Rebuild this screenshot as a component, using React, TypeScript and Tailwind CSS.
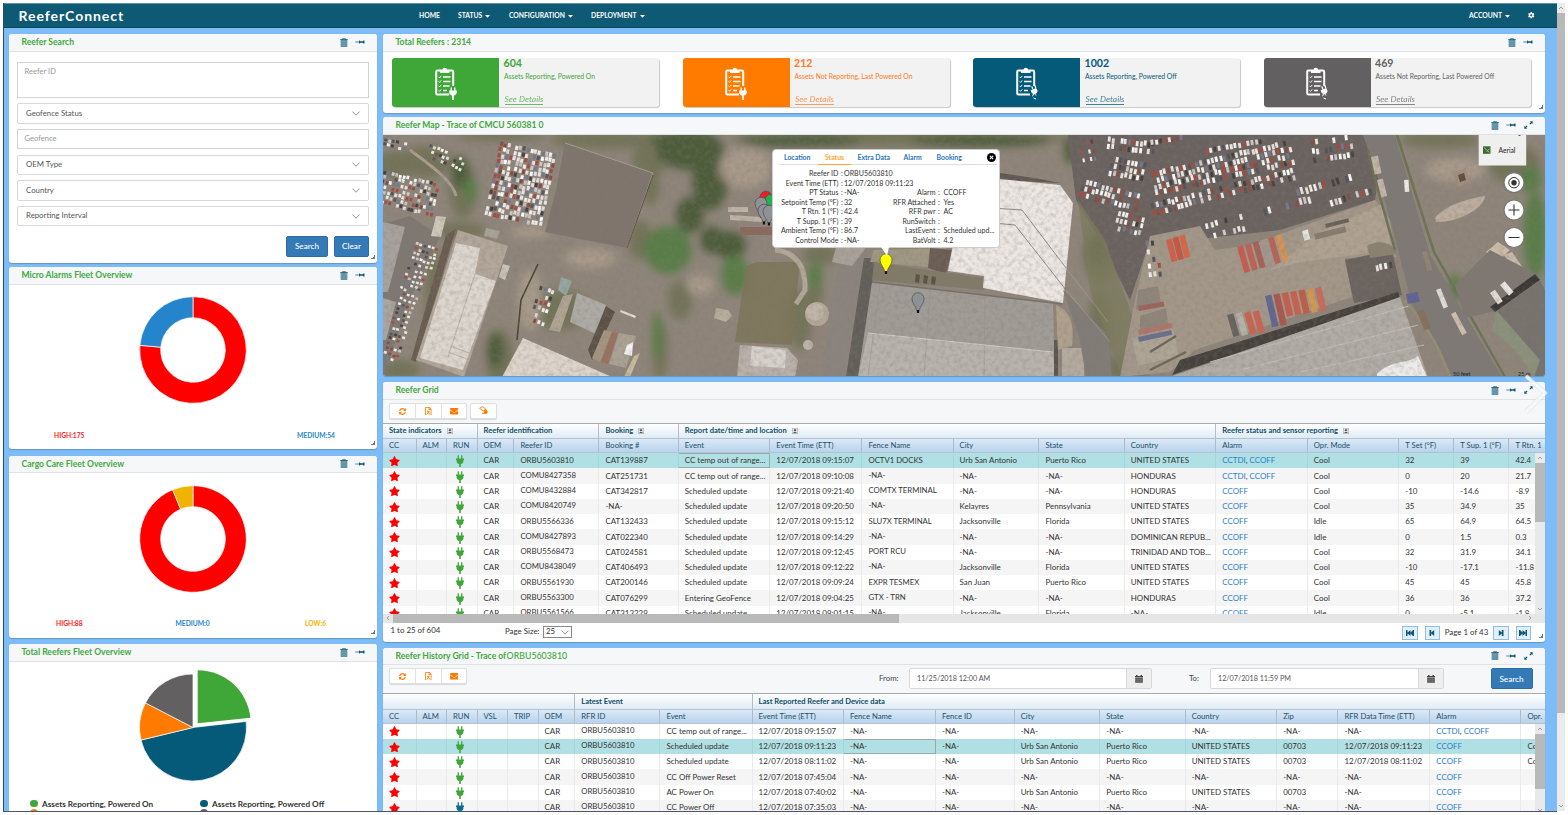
import React from "react";
import { FaStar, FaEnvelope, FaCog, FaSyncAlt, FaRegFileExcel } from "react-icons/fa";

/* ---------- small icons ---------- */
const Trash = () => (
  <svg className="h-[9px] w-[8px]" viewBox="0 0 8 9">
    <path d="M2.6 1V.4h2.800V1" fill="none" stroke="#2f7089" strokeWidth=".8" />
    <rect x=".3" y="1" width="7.400" height="1.100" fill="#2f7089" />
    <path d="M1.100 2.400h5.800V8.700H1.100Z" fill="#8fb0bd" stroke="#2f7089" strokeWidth=".7" />
    <path d="M2.700 3.200v4.800M4 3.200v4.800M5.300 3.200v4.800" stroke="#2f7089" strokeWidth=".6" />
  </svg>
);
const Pin = () => (
  <svg className="h-[6px] w-[10px]" viewBox="0 0 10 6">
    <path d="M.3 3h4" stroke="#3d7c93" strokeWidth=".9" />
    <path d="M4 1.200 5.600 2.200h2L8.500 1.400h1v3.200h-1L7.600 3.800h-2L4 4.800Z" fill="#0e5a75" />
  </svg>
);
const Expand = () => (
  <svg className="h-[8px] w-[9px]" viewBox="0 0 9 8">
    <path d="M5.800.3h2.900v2.700L7.700 2.200 6.200 3.500 5.400 2.800 6.800 1.300ZM.3 7.700V5l1 .8L2.800 4.500l.8.700L2.200 6.700l1 1Z" fill="#0e5a75" />
  </svg>
);
const Resize = () => (
  <svg className="absolute right-[2px] bottom-[4px] h-[4px] w-[4px]" viewBox="0 0 4 4">
    <path d="M4 0v4H0V3h2V2h1V0Z" fill="#777" />
  </svg>
);
const Chevron = () => (
  <svg className="h-[5px] w-[8px]" viewBox="0 0 8 5">
    <path d="M.5.6 4 4.200 7.500.6" fill="none" stroke="#777" strokeWidth=".8" />
  </svg>
);
const Caret = () => (
  <svg className="mt-[1px] h-[3px] w-[5px]" viewBox="0 0 5 3">
    <path d="M0 0h5L2.500 2.700Z" fill="currentColor" />
  </svg>
);
const Plus = () => (
  <svg className="ml-[5px] inline-block h-[6px] w-[6px]" viewBox="0 0 6 6">
    <rect x=".3" y=".3" width="5.400" height="5.400" fill="#f1f1f1" stroke="#aaa" strokeWidth=".6" />
    <path d="M3 1v2.400M1.700 2.200h2.600M1.500 4.600h3" stroke="#222" strokeWidth=".8" />
  </svg>
);
const Calendar = () => (
  <svg className="h-[8px] w-[8px]" viewBox="0 0 8 8">
    <path d="M0 1h1V0h1.500v1h3V0H7v1h1v1.600H0Z" fill="#444" />
    <rect x=".2" y="3" width="7.600" height="4.800" fill="#555" />
    <path d="M.2 4.600h7.600M.2 6.200h7.600M2.700 3v4.800M5.300 3v4.800" stroke="#8a8a8a" strokeWidth=".4" />
  </svg>
);
const Tag = () => (
  <svg className="mb-[2px] h-[9px] w-[9px]" viewBox="0 0 9 9">
    <path d="M.6 2.400 3.200.5l3.600 2.600L4.300 5Z" fill="#fff" stroke="#ff7b00" strokeWidth=".9" />
    <path d="M5 4.800 7 3.200l1.700 2.400c.2 1.500-1 2.600-2.600 2.400L3 7.700l.2-.9 1.900-.1Z" fill="#ff7b00" />
  </svg>
);

/* ---------- panel ---------- */
type PanelProps = { title: React.ReactNode; className: string; expand?: boolean; resize?: boolean; children: React.ReactNode };
const Panel = ({ title, className, expand, resize, children }: PanelProps) => (
  <section className={"relative flex shrink-0 flex-col overflow-hidden rounded-[3px] bg-white shadow-[0_1px_1px_rgba(0,0,0,0.2)] " + className}>
    <header className="flex h-[17.500px] shrink-0 items-center border-b border-[#e0e2e4] bg-[#f5f7f9] pr-[12px] pl-[12.500px]">
      <h2 className="flex-1 pt-[0.500px] text-[8.550px] leading-none font-bold whitespace-nowrap text-[#42a83c]">{title}</h2>
      <div className="flex items-center gap-[7px]">
        <Trash />
        <Pin />
        {expand && <span className="ml-[1px]"><Expand /></span>}
      </div>
    </header>
    {children}
    {resize && <Resize />}
  </section>
);

/* ---------- navbar ---------- */
const NavItem = ({ label, className, caret }: { label: string; className: string; caret?: boolean }) => (
  <a className={"flex items-center gap-[3px] " + className}>
    {label}
    {caret && <Caret />}
  </a>
);
const Navbar = () => (
  <nav className="flex h-[25px] shrink-0 items-center border-t border-b border-t-[#5f93a5] border-b-[#0b4a61] bg-[#0e5a75] text-[6.750px] font-bold text-white">
    <div className="w-[415px] pl-[14.500px] text-[14px] tracking-[0.950px]">ReeferConnect</div>
    <NavItem label="HOME" className="w-[39px]" />
    <NavItem label="STATUS" className="w-[51px]" caret />
    <NavItem label="CONFIGURATION" className="w-[82px]" caret />
    <NavItem label="DEPLOYMENT" className="flex-1" caret />
    <NavItem label="ACCOUNT" className="" caret />
    <FaCog className="mr-[22px] ml-[18px] size-[6.500px]" />
  </nav>
);

/* ---------- search panel ---------- */
const Select = ({ label }: { label: string }) => (
  <div className="flex h-[20.500px] items-center justify-between rounded-[2px] border border-[#d8d8d8] px-[8.500px] text-[7.800px] text-[#555]">
    {label}
    <Chevron />
  </div>
);
const Btn = ({ label, className }: { label: string; className: string }) => (
  <button className={"h-[21px] rounded-[2px] border border-[#2e6da4] bg-[#337ab7] text-[8.200px] font-medium text-white " + className}>{label}</button>
);
const SearchPanel = () => (
  <Panel title="Reefer Search" className="h-[229px]" resize>
    <div className="flex flex-col gap-[5.200px] pt-[10.500px] pr-[8px] pl-[7.500px]">
      <div className="h-[36px] border border-[#d4d4d4] px-[7px] pt-[3px] text-[7.600px] text-[#999]">Reefer ID</div>
      <Select label="Geofence Status" />
      <div className="flex h-[20.500px] items-center border border-[#d4d4d4] px-[7px] text-[7.600px] text-[#999]">Geofence</div>
      <Select label="OEM Type" />
      <Select label="Country" />
      <Select label="Reporting Interval" />
      <div className="mt-[4px] flex justify-end gap-[6px]">
        <Btn label="Search" className="w-[42px]" />
        <Btn label="Clear" className="w-[35px]" />
      </div>
    </div>
  </Panel>
);

/* ---------- charts ---------- */
const pt = (cx: number, cy: number, r: number, deg: number) => {
  const a = ((deg - 90) * Math.PI) / 180;
  return (cx + r * Math.cos(a)).toFixed(2) + " " + (cy + r * Math.sin(a)).toFixed(2);
};
const arc = (cx: number, cy: number, R: number, r: number, a: number, b: number) => {
  const big = b - a > 180 ? 1 : 0;
  if (r === 0) return `M${cx} ${cy}L${pt(cx, cy, R, a)}A${R} ${R} 0 ${big} 1 ${pt(cx, cy, R, b)}Z`;
  return `M${pt(cx, cy, R, a)}A${R} ${R} 0 ${big} 1 ${pt(cx, cy, R, b)}L${pt(cx, cy, r, b)}A${r} ${r} 0 ${big} 0 ${pt(cx, cy, r, a)}Z`;
};
const Donut = ({ split, color }: { split: number; color: string }) => (
  <svg className="mt-[10.500px] ml-[129px] h-[110px] w-[110px] shrink-0" viewBox="0 0 110 110">
    <path d={arc(55, 55, 53.300, 32.300, 0, split)} fill="#ff0000" stroke="#fff" strokeWidth=".7" />
    <path d={arc(55, 55, 53.300, 32.300, split, 360)} fill={color} stroke="#fff" strokeWidth=".7" />
  </svg>
);
const Pie = () => (
  <svg className="mt-[6.500px] ml-[129px] h-[116px] w-[120px] shrink-0" viewBox="0 0 120 116">
    <path d={arc(59.700, 55.200, 53, 0, 0, 84)} fill="#3fa638" />
    <path d={arc(55, 59.500, 53.500, 0, 83.500, 256.400)} fill="#045a78" stroke="#fff" strokeWidth=".7" />
    <path d={arc(55, 59.500, 53.500, 0, 256.400, 297.400)} fill="#ff7b00" stroke="#fff" strokeWidth=".7" />
    <path d={arc(55, 59.500, 53.500, 0, 297.400, 360)} fill="#636061" stroke="#fff" strokeWidth=".7" />
  </svg>
);
const Legend = ({ dot, label }: { dot: string; label: string }) => (
  <div className="flex items-center gap-[4.500px] whitespace-nowrap">
    <span className={"size-[7.500px] rounded-full " + dot} />
    {label}
  </div>
);

/* ---------- totals ---------- */
const Clipboard = ({ off }: { off?: boolean }) => (
  <svg className="h-[34px] w-[22px]" viewBox="0 0 22 34">
    <path d="M14 28.500H2.500A1.300 1.300 0 0 1 1.200 27.200V5.800A1.300 1.300 0 0 1 2.500 4.500h14.400a1.300 1.300 0 0 1 1.300 1.300V20" fill="none" stroke="#fff" strokeWidth="2" />
    <path d="M5 7V4h2.500a2.300 2.300 0 0 1 4.600 0h2.400v3Z" fill="#fff" />
    <path d="M8 11h7.500M8 15.500h7.500M8 20h6.500M8 24.500h4" stroke="#fff" strokeWidth="1.500" />
    <path d="m3.600 10.800 1 1.100 1.600-2M3.600 15.300l1 1.100 1.600-2M3.600 19.800l1 1.100 1.600-2M3.600 24.300l1 1.100 1.600-2" fill="none" stroke="#fff" strokeWidth=".9" />
    {off ? (
      <>
        <path d="m14.700 24.200 5.600-2.100 1.300 2.900c-.3 2-1.800 3.200-3.600 3.100-1.700-.1-2.900-1.800-3.300-3.900ZM15.200 20.600l1.200-.4 1 2.800-1.200.4ZM18.200 19.500l1.200-.4 1 2.800-1.200.4Z" fill="#fff" />
        <path d="m17.500 28-1 2.300M18.800 28l1.200 1.500M17.500 32l2.500 1" stroke="#fff" strokeWidth="1" />
      </>
    ) : (
      <path d="M14.200 24.500h7.600v1.800c0 1.900-1.400 3-2.900 3.200V34h-1.800v-4.500c-1.500-.2-2.900-1.300-2.900-3.200ZM15.500 21.500h1.400v3h-1.400ZM19.100 21.500h1.400v3h-1.400Z" fill="#fff" />
    )}
  </svg>
);
type CardProps = { n: string; text: string; bg: string; fg: string; off?: boolean };
const Card = ({ n, text, bg, fg, off }: CardProps) => (
  <div className="flex h-[49px] w-[267px] overflow-hidden rounded-[3px] bg-[#f2f2f2] shadow-[1px_1px_1px_#c8c8c8]">
    <div className={"flex w-[107px] shrink-0 items-center justify-center " + bg}>
      <Clipboard off={off} />
    </div>
    <div className={"pl-[4.500px] whitespace-nowrap " + fg}>
      <div className="text-[10.600px] leading-[11px] font-bold">{n}</div>
      <div className="mt-[3px] ml-[0.500px] text-[6.800px] leading-[8px]">{text}</div>
      <div className="mt-[13.500px] ml-[1px] w-fit border-b border-current text-[8.500px] leading-[10px] italic opacity-75">See Details</div>
    </div>
  </div>
);

/* ---------- map ---------- */
const rng = (seed: number) => () => {
  seed = (seed * 1103515245 + 12345) % 2147483648;
  return seed / 2147483648;
};
type LotProps = { x: number; y: number; cols: number; rows: number; dx: number; dy: number; rot: number; seed: number; fill?: number; cw?: number; ch?: number };
const paint = ["#f6f2f0", "#ffffff", "#e6e0de", "#f0ecea", "#a9493f", "#54535c", "#cfcaca", "#454040", "#efe9e6", "#8c4b42", "#717a90", "#f4efec"];
const Lot = ({ x, y, cols, rows, dx, dy, rot, seed, fill = 0.8, cw = 2.200, ch = 4 }: LotProps) => {
  const r = rng(seed);
  for (let i = 0; i < 5; i++) r();
  const out: React.ReactNode[] = [];
  for (let j = 0; j < rows; j++)
    for (let i = 0; i < cols; i++) {
      const keep = r() < fill;
      const c = paint[Math.floor(r() * paint.length)];
      const ox = r() * 1.200;
      const oy = r() * 2;
      if (keep) out.push(<rect key={j + "-" + i} x={i * dx + ox} y={j * dy + oy} width={cw} height={ch} fill={c} />);
    }
  return <g transform={`translate(${x} ${y}) rotate(${rot})`}>{out}</g>;
};
const Blobs = ({ list, color }: { list: number[][]; color: string }) => (
  <g fill={color}>
    {list.map(([x, y, a, b], i) => (
      <ellipse key={i} cx={x} cy={y} rx={a} ry={b} />
    ))}
  </g>
);
const Crate = ({ x, y, w, h, rot, c }: { x: number; y: number; w: number; h: number; rot: number; c: string }) => (
  <rect x={x} y={y} width={w} height={h} fill={c} transform={`rotate(${rot} ${x} ${y})`} />
);
const Marker = ({ x, y, c }: { x: number; y: number; c: string }) => (
  <g transform={`translate(${x} ${y})`}>
    <path d="M-1.300 15 C-2 10-6 8.500-6 3.500a6 6.300 0 0 1 12 0C6 8.500 2 10 1.300 15Z" fill={c} stroke="#4d4d4d" strokeWidth=".7" />
    <rect x="-1.100" y="14.500" width="2.200" height="3" fill="#111" />
  </g>
);
const Imagery = () => (
  <svg className="block h-[241.500px] w-full" viewBox="383 135 1162 241.500" preserveAspectRatio="none">
    <defs>
      <filter id="soft" x="-5%" y="-5%" width="110%" height="110%">
        <feGaussianBlur stdDeviation="4" />
      </filter>
      <filter id="edge" x="0" y="0" width="100%" height="100%">
        <feGaussianBlur stdDeviation=".5" />
      </filter>
      <filter id="grain" x="0" y="0" width="100%" height="100%">
        <feTurbulence type="fractalNoise" baseFrequency=".22" numOctaves="3" seed="7" />
        <feColorMatrix type="matrix" values="0 0 0 0 .22  0 0 0 0 .2  0 0 0 0 .15  1.300 0 0 0 -.52" />
      </filter>
    </defs>
    <rect x="383" y="135" width="1162" height="242" fill="#8f857b" />
    <g filter="url(#soft)">
      <Blobs color="#727358" list={[[395, 165, 20, 14], [425, 162, 26, 16], [463, 190, 14, 28], [500, 136, 45, 5], [460, 230, 26, 8], [610, 140, 60, 9], [650, 160, 18, 16], [640, 240, 12, 20], [650, 185, 10, 20], [560, 310, 30, 20], [435, 300, 10, 50], [400, 370, 20, 10], [500, 360, 14, 30], [660, 350, 8, 30], [680, 300, 12, 20], [900, 138, 170, 8], [820, 255, 18, 10], [800, 320, 12, 30], [815, 290, 8, 20], [1100, 260, 16, 22], [1100, 330, 12, 40], [1120, 370, 14, 14], [1440, 140, 40, 8], [1515, 165, 26, 20]]} />
      <Blobs color="#4d5c3a" list={[[690, 150, 34, 20], [710, 180, 18, 30], [690, 215, 14, 18], [730, 245, 16, 14], [460, 172, 9, 16], [495, 350, 8, 18], [712, 240, 12, 14], [680, 140, 30, 8], [800, 141, 60, 6], [980, 141, 70, 6], [1070, 150, 6, 14], [1098, 250, 12, 16], [1178, 285, 13, 14]]} />
      <Blobs color="#597d46" list={[[668, 250, 24, 24], [735, 275, 14, 20], [657, 335, 5, 24], [1535, 235, 12, 44], [1530, 180, 12, 12], [1455, 288, 7, 14], [815, 275, 8, 12], [470, 190, 7, 12]]} />
      <Blobs color="#a89a8b" list={[[745, 168, 26, 20], [590, 258, 26, 10], [530, 232, 20, 6], [1455, 170, 30, 12], [700, 285, 14, 10], [530, 300, 12, 30]]} />
    </g>
    <g filter="url(#edge)">
      <path d="M565 143 653 173 627 248 545 232 556 190Z" fill="#7f756e" />
      <path d="M565 143 653 173 627 248" fill="none" stroke="#a69c8e" strokeWidth="1" />
      <path d="M653 175 627 248" stroke="#57503f" strokeWidth="1" />
      <path d="M410 150C430 165 452 180 456 196" fill="none" stroke="#a99d8c" strokeWidth="3" />
      <path d="M383 224 410 216 440 236 410 300 383 377Z" fill="#7f7872" />
      <path d="M383 222 405 227 388 292 383 292Z" fill="#a8a29c" />
      <path d="M383 298 396 302 386 340 383 340Z" fill="#aba6a0" />
      <path d="M446 235 456 229 416 362 411 360Z" fill="#6a5b51" />
      <path d="M458 230 508 246 464 377 416 360Z" fill="#b3a69b" />
      <path d="M456 243 480 248 475 274 496 281 463 370 420 358Z" fill="#ddd6cf" />
      <path d="M475 274 448 357M450 346l22 8M448 352l22 8" stroke="#b3aaa2" strokeWidth=".8" />
      <path d="M436 216 446 217 441 237 431 236Z" fill="#cfc8bd" />
      <path d="M486 228 500 231 497 239 484 236Z" fill="#a9a397" />
      <path d="M503 264 510 266 505 280 499 277Z" fill="#c9c3bb" />
      <path d="M538 264 521 300 517 340" fill="none" stroke="#4a4536" strokeWidth="1.600" />
      <path d="M523 338 612 377 502 377Z" fill="#ddd4cb" />
      <path d="M577 293 606 305 596 334 570 322Z" fill="#aeaba6" />
      <path d="M563 296 573 294 560 332 549 330Z" fill="#b0a493" />
      <path d="M606 306 615 312 592 360 588 350Z" fill="#5b5147" />
      <path d="M604 330 612 332 600 362 592 358Z" fill="#a3957f" />
      <path d="M612 332 618 333 608 364 601 362Z" fill="#9a7161" />
      <path d="M619 333 636 336 626 368 609 364Z" fill="#aba195" />
      <path d="M627 345 633 342 632 356 624 354Z" fill="#f5f5f5" />
      <path d="M561 277 572 281 566 296 558 290Z" fill="#93a6a1" />
      <path d="M621 310l15 6-1 2-15-6Z" fill="#e6dfd6" />
      <path d="M634 356l6-3-10 24h-6Z" fill="#c9b9a2" />
      <path d="M728 207h20v5h-20ZM730 215l50 3v5l-50-3Z" fill="#bfb2a6" />
      <path d="M740 227h34v8h-34Z" fill="#8a6a5c" />
      <path d="M746 266 757 262 800 262 792 345 735 342Z" fill="#7a7356" opacity=".8" />
      <path d="M716 308l12 2 4 6-6 6-12-4Z" fill="#b9ad9e" />
      <path d="M740 345 787 348 798 360 795 377 737 377Z" fill="#b9b1aa" />
      <path d="M752 346 786 350 785 368 750 366Z" fill="#d6d1cb" />
      <path d="M775 250C797 252 806 268 805 290L796 304" fill="none" stroke="#b3a898" strokeWidth="5" />
      <circle cx="817" cy="314" r="12" fill="#b3a79a" />
      <circle cx="815" cy="312" r="9" fill="#c1b6aa" />
      <circle cx="808" cy="345" r="5" fill="#b9b5a8" />
      <path d="M842 250 868 252 846 377 822 377 834 290Z" fill="#8b847e" />
      <path d="M838 240 872 240 852 266 832 262Z" fill="#a9a199" />
      <path d="M864 258 876 258 858 377 846 377Z" fill="#625e5a" />
      <path d="M874 250 946 248 940 268 870 262Z" fill="#a09784" />
      <path d="M930 248 952 250 946 274 928 268Z" fill="#6b5d53" />
      <path d="M874 262 984 278 984 290 872 280Z" fill="#817a69" />
      <path d="M916 274l4 1-1 8-4-1ZM924 275l4 1-1 8-4-1ZM932 276l4 1-1 8-4-1Z" fill="#5a5244" />
      <path d="M1000 173 1040 179 1060 183 1000 180Z" fill="#5f5852" />
      <path d="M990 178 1060 185 1073 203 1063 303 983 288 984 276 948 271 953 245Z" fill="#ece7e3" />
      <path d="M872 282 1053 303 1055 377 858 377Z" fill="#a09c97" />
      <path d="M868 333 1053 352 1055 377 858 377Z" fill="#b8b3ad" />
      <path d="M880 282 868 377M930 290 924 377M985 296 984 377" stroke="#94908b" strokeWidth=".5" />
      <path d="M872 282 1062 304" stroke="#75706a" strokeWidth="1.500" />
      <path d="M868 333 1053 352" stroke="#cfcac5" strokeWidth="1" />
      <path d="M1054 340h4v38h-4Z" fill="#5a5650" />
      <path d="M1056 305C1072 312 1074 325 1072 346L1058 350Z" fill="#b0a08e" />
      <path d="M1062 348h22v28h-22Z" fill="#b3aaa0" />
      <path d="M1063 290 1108 335 1112 377 1086 377 1080 340Z" fill="#807b77" />
      <path d="M1068 135 1385 135 1375 200 1280 230 1190 240 1150 240 1130 300 1100 240 1076 200Z" fill="#6a625e" />
      <path d="M1078 200 1105 240 1130 310 1150 377 1122 377 1090 290Z" fill="#7b7b5c" opacity=".8" />
      <path d="M1150 236 1200 226 1215 250 1250 245 1375 200 1390 220 1396 257 1345 258 1352 297 1195 350 1170 372 1120 377 1135 300Z" fill="#a3978a" />
      <path d="M1320 232 1382 204 1392 250 1300 262 1270 270Z" fill="#b5a797" opacity=".7" />
      <path d="M1345 260 1392 250 1402 295 1354 303Z" fill="#6a645e" />
      <path d="M1367 246C1380 238 1394 244 1398 254L1370 258Z" fill="#8b8270" />
      <path d="M1180 360 1398 292 1400 298 1172 375Z" fill="#45423c" />
      <path d="M1170 377 1400 297 1428 377Z" fill="#b0aca7" />
      <path d="M1210 362 1409 306M1240 370 1418 325M1300 372 1424 345" stroke="#c2beb9" strokeWidth="1" />
      <path d="M1377 374C1390 360 1408 364 1418 356L1427 377H1377Z" fill="#ecebe9" />
      <path d="M1363 135 1395 135 1430 255 1502 377 1452 377 1412 305 1398 250 1382 190Z" fill="#7e7974" />
      <path d="M1368 150 1378 190 1395 250M1397 135 1434 252 1505 377" fill="none" stroke="#6d7255" strokeWidth="2.500" />
      <path d="M1405 300C1430 330 1440 350 1450 377" fill="none" stroke="#958d74" strokeWidth="3" />
      <path d="M1435 218C1445 205 1470 198 1485 196 1484 208 1460 222 1436 222Z" fill="#bdae9f" />
      <path d="M1486 252 1498 242 1510 250 1496 263Z" fill="#cdbda8" />
      <path d="M1504 255l8-3 11 16-7 4Z" fill="#c9baab" />
      <path d="M1455 285 1490 250 1538 275 1500 310 1465 318Z" fill="#7f7872" />
      <path d="M1490 307 1535 274 1540 280 1495 312Z" fill="#3a3834" />
      <path d="M1497 311 1540 280 1545 290V377H1536L1500 330Z" fill="#77726d" />
      <path d="M1497 311 1540 360 1534 377 1515 350 1492 330Z" fill="#8b917d" />
      <path d="M1453 172 1466 168 1470 182 1458 187Z" fill="#a58d7b" />
      <path d="M1458 175 1464 173 1466 180 1460 182Z" fill="#5b5047" />
      <path d="M1138 290l20-4 3 18-25 6ZM1140 316l26-8 2 16-28 6Z" fill="#8f857a" />
      <Crate x={1132} y={338} w={42} h={28} rot={-12} c="#aea597" />
      <path d="M1150 352 1176 336M1150 370 1186 352" stroke="#6d665c" strokeWidth="2.500" />
      <Lot x={500} y={141} cols={15} rows={14} dx={3.900} dy={5.400} rot={12} seed={11} fill={0.92} cw={3} ch={4.200} />
      <Lot x={430} y={143} cols={10} rows={3} dx={4} dy={5} rot={22} seed={5} fill={0.75} cw={2.800} ch={3} />
      <Lot x={384} y={169} cols={15} rows={7} dx={3.900} dy={5} rot={14} seed={9} fill={0.85} cw={2.800} ch={3.400} />
      <Lot x={384} y={137} cols={6} rows={2} dx={4} dy={5} rot={12} seed={3} cw={3} ch={3} />
      <Lot x={416} y={241} cols={6} rows={5} dx={4} dy={5} rot={16} seed={22} fill={0.92} cw={2.800} ch={2.600} />
      <Lot x={407} y={266} cols={5} rows={6} dx={4.500} dy={5} rot={20} seed={17} fill={0.88} cw={2.800} ch={2.400} />
      <Lot x={400} y={296} cols={4} rows={6} dx={4.500} dy={5} rot={20} seed={19} fill={0.88} cw={2.800} ch={2.400} />
      <Lot x={392} y={326} cols={4} rows={7} dx={4.300} dy={5} rot={18} seed={31} fill={0.9} cw={3} ch={2.600} />
      <Lot x={540} y={285} cols={4} rows={6} dx={4.200} dy={6.500} rot={18} seed={41} fill={0.65} cw={2.800} />
      <Lot x={1078} y={142} cols={4} rows={3} dx={4} dy={8} rot={-12} seed={33} fill={0.75} />
      <Lot x={1108} y={136} cols={12} rows={2} dx={4} dy={7} rot={6} seed={35} fill={0.9} cw={2.800} ch={5.200} />
      <Lot x={1112} y={155} cols={9} rows={3} dx={4} dy={7} rot={12} seed={47} fill={0.9} cw={2.800} ch={5.200} />
      <Lot x={1082} y={178} cols={15} rows={3} dx={4.100} dy={6.500} rot={14} seed={51} fill={0.88} cw={2.800} ch={5} />
      <Lot x={1118} y={210} cols={7} rows={3} dx={4.100} dy={7} rot={14} seed={57} fill={0.7} cw={2.800} ch={5} />
      <Lot x={1150} y={171} cols={35} rows={4} dx={4.100} dy={6.500} rot={-13} seed={67} fill={0.9} cw={2.800} ch={5.400} />
      <Lot x={1150} y={203} cols={36} rows={2} dx={4.100} dy={6.500} rot={-14} seed={71} fill={0.9} cw={2.800} ch={5.400} />
      <Lot x={1150} y={139} cols={8} rows={1} dx={4.200} dy={7} rot={-8} seed={77} fill={0.9} cw={2.800} ch={5} />
      <Lot x={1204} y={148} cols={14} rows={1} dx={4.200} dy={7} rot={-10} seed={73} fill={0.9} cw={2.800} ch={5} />
      <Lot x={1310} y={139} cols={10} rows={3} dx={4.200} dy={9} rot={-8} seed={79} fill={0.65} cw={2.800} ch={5.600} />
      <Lot x={1204} y={222} cols={10} rows={2} dx={5} dy={12} rot={-14} seed={83} fill={0.5} cw={2.800} ch={5.600} />
      <Lot x={1290} y={190} cols={14} rows={1} dx={4.600} dy={9} rot={-16} seed={89} fill={0.7} cw={2.800} ch={7} />
      <Lot x={1262} y={208} cols={12} rows={1} dx={4.600} dy={9} rot={-15} seed={91} fill={0.5} cw={2.800} ch={7} />
      <Lot x={1328} y={199} cols={10} rows={1} dx={4.600} dy={9} rot={-16} seed={97} fill={0.9} cw={2.800} ch={6.500} />
      <Lot x={1145} y={240} cols={3} rows={5} dx={4.600} dy={8} rot={-6} seed={101} fill={0.6} cw={3} ch={5} />
      <Lot x={1374} y={264} cols={5} rows={1} dx={4.600} dy={9} rot={-10} seed={105} fill={0.8} cw={2.800} ch={6} />
      {["#d0614b", "#c85643", "#d4684a"].map((c, i) => (
        <Crate key={i} x={1166 + i * 6.500} y={240 - i * 2} w={6} h={23} rot={-14} c={c} />
      ))}
      {["#c65c50", "#bd6258", "#a7625a", "#a39792", "#b8645a", "#d69455"].map((c, i) => (
        <Crate key={i} x={1237 + i * 7.700} y={247 - i * 2.200} w={6} h={27} rot={-16} c={c} />
      ))}
      {["#66625e", "#b5b2ad", "#cb6451", "#cb6455"].map((c, i) => (
        <Crate key={i} x={1227 + i * 8.500} y={315 - i} w={6.500} h={23} rot={-16} c={c} />
      ))}
      {["#5f6690", "#a8584f", "#c75d50", "#c9604f", "#bf5d4c", "#cf9a50", "#ca6a5b"].map((c, i) => (
        <Crate key={i} x={1265 + i * 8.300} y={296 - i * 1.300} w={6.500} h={i < 2 ? 32 : 24} rot={-13} c={c} />
      ))}
      <Crate x={1371} y={157} w={7} h={18} rot={-12} c="#c2b3a6" />
      <Crate x={1377} y={180} w={6} h={18} rot={-14} c="#c2b5ab" />
      <Crate x={1404} y={180} w={4.500} h={12} rot={-4} c="#ecebe9" />
      <Crate x={1422} y={252} w={5} h={20} rot={-16} c="#948373" />
      <Crate x={1436} y={290} w={5} h={20} rot={-22} c="#e0ddd9" />
      <Crate x={1451} y={314} w={5} h={24} rot={-28} c="#cfbeb0" />
      <Crate x={1406} y={294} w={12} h={10} rot={-10} c="#5f6391" />
      <Crate x={1417} y={312} w={7} h={20} rot={-22} c="#85705f" />
      <Crate x={1490} y={293} w={6} h={14} rot={-34} c="#e0dcd8" />
      <Crate x={1500} y={285} w={6} h={14} rot={-40} c="#e9e7e4" />
      <Crate x={1314} y={234} w={32} h={6} rot={-14} c="#857b70" />
      <Crate x={1325} y={224} w={24} h={4} rot={-14} c="#6b6258" />
      <Crate x={1302} y={231} w={6} h={10} rot={-14} c="#e6e4e2" />
      <Crate x={1138} y={306} w={26} h={5} rot={-10} c="#9a655c" />
      <Crate x={1138} y={337} w={34} h={5} rot={-12} c="#6b6e8c" />
      <Crate x={1138} y={330} w={34} h={5} rot={-12} c="#b07468" />
    </g>
    <rect x="383" y="135" width="1162" height="242" filter="url(#grain)" opacity=".5" />
    <path d="M999 208.500 1022 210 1066 268M999 223.500 1015 225 1066 290" fill="none" stroke="#666" strokeWidth=".7" />
    <path d="M1066 268 1108 322M1066 290 1110 342" fill="none" stroke="#bbb" strokeWidth=".6" opacity=".6" />
    <Marker x={766} y={194} c="#ee1c25" />
    <Marker x={771} y={197} c="#22b14c" />
    <Marker x={761} y={200} c="#8e9296" />
    <Marker x={764} y={207} c="#8e9296" />
    <Marker x={769} y={208} c="#8e9296" />
    <Marker x={886} y={256.500} c="#ffff00" />
    <Marker x={918} y={295.500} c="#8e9296" />
    <rect x="1478.700" y="135" width="47.500" height="30.500" fill="#efefed" />
    <rect x="1483" y="146.300" width="7.500" height="7.500" fill="#3f6a2f" />
    <path d="m1484 147.500 5.500 5M1486.500 152l3-3.500" stroke="#b5c7a5" strokeWidth=".8" />
    <text x="1498.500" y="152.800" fontSize="6.700" fill="#222">Aerial</text>
    <rect x="1518.500" y="135" width="2" height="1" fill="#555" />
    {[182.700, 210, 237.500].map((y) => (
      <circle key={y} cx="1514" cy={y} r="10" fill="#fff" stroke="#777" strokeWidth="1.200" />
    ))}
    <circle cx="1514" cy="182.700" r="5.200" fill="none" stroke="#333" strokeWidth="1" />
    <circle cx="1514" cy="182.700" r="2.700" fill="#333" />
    <path d="M1508.500 210h11M1514 204.500v11M1508.500 237.500h11" stroke="#333" strokeWidth="1.100" />
    <text x="1453" y="376" fontSize="5.500" fill="#222">50 feet</text>
    <text x="1518" y="376" fontSize="5.500" fill="#222">25 m</text>
  </svg>
);

const left: [string, string][] = [["PT Status", "-NA-"], ["Setpoint Temp (°F)", "32"], ["T Rtn. 1 (°F)", "42.4"], ["T Supp. 1 (°F)", "39"], ["Ambient Temp (°F)", "86.7"], ["Control Mode", "-NA-"]];
const right: [string, string][] = [["Alarm", "CCOFF"], ["RFR Attached", "Yes"], ["RFR pwr", "AC"], ["RunSwitch", ""], ["LastEvent", "Scheduled upd..."], ["BatVolt", "4.2"]];
const Pair = ({ k, v, className }: { k: string; v: string; className: string }) => (
  <>
    <span className={"text-right " + className}>{k}</span>
    <span className="pl-[2.500px]">:</span>
    <span>{v}</span>
  </>
);
const Popup = () => (
  <div className="absolute top-[14px] left-[388.500px] h-[99.500px] w-[228px] rounded-[4px] border border-[#ccc] bg-white pt-[2.500px] text-[7.100px] text-[#333]">
    <div className="ml-[6px] flex h-[13px] w-[218px] items-start border-b border-[#ddd] pt-[0.500px] text-[6.900px] leading-[8px] font-bold text-[#2a73b8]">
      <span className="w-[33.500px] pl-[5.500px]">Location</span>
      <span className="ml-[6px] h-[12.500px] w-[33px] border-b-[1.500px] border-[#ffa632] text-center text-[#ffa632]">Status</span>
      <span className="ml-[6.500px] w-[46px]">Extra Data</span>
      <span className="w-[33px]">Alarm</span>
      <span className="flex-1">Booking</span>
      <svg className="mr-[1px] size-[9px]" viewBox="0 0 9 9">
        <circle cx="4.500" cy="4.500" r="4.500" fill="#000" />
        <path d="m2.800 2.800 3.400 3.400M6.200 2.800 2.800 6.200" stroke="#fff" strokeWidth="1.100" />
      </svg>
    </div>
    <div className="mt-[4px] grid grid-cols-[66px_5.500px_60px_31.500px_8px_1fr] leading-[9.550px] whitespace-nowrap">
      <Pair k="Reefer ID" v="ORBU5603810" className="" />
      <span className="col-span-3" />
      <Pair k="Event Time (ETT)" v="12/07/2018 09:11:23" className="-ml-5" />
      <span className="col-span-3" />
      {left.map(([k, v], i) => (
        <React.Fragment key={k}>
          <Pair k={k} v={v} className="-ml-5" />
          <Pair k={right[i][0]} v={right[i][1]} className="-ml-10" />
        </React.Fragment>
      ))}
    </div>
    <svg className="absolute top-[97px] left-[108px] h-[10px] w-[10px]" viewBox="0 0 10 10">
      <path d="M0 0h8L6 9Z" fill="#fff" />
    </svg>
  </div>
);

/* ---------- grids ---------- */
const GRID1 = "grid grid-cols-[33.500px_30.500px_30.500px_36.900px_85px_79.400px_91.500px_92.200px_91.100px_85.900px_85.300px_91.500px_91.500px_91.500px_55.100px_55.100px_60px]";
const GRID2 = "grid grid-cols-[33.500px_30.500px_30.500px_30.500px_30.500px_36.800px_85.100px_92.200px_91.400px_92px_78.700px_85.700px_85.300px_91.500px_61.300px_91.900px_91.100px_60px]";
const Star = () => <FaStar className="mb-[0.500px] -ml-[0.500px] h-[10.500px] w-[11px] text-[#f00]" />;
const Plug = ({ blue }: { blue?: boolean }) => (
  <svg className={"ml-[2.500px] h-[12px] w-[8px] " + (blue ? "text-[#0e6a94]" : "text-[#3fa638]")} viewBox="0 0 8 12">
    <path d="M1.600.3h1.300v3.200h2.200V.3h1.300v3.200H8v1.400h-.6v1.400c0 1.500-1 2.500-2.600 2.800V12H3.200V9.100C1.600 8.800.6 7.800.6 6.300V4.900H0V3.500h1.600Z" fill="currentColor" />
  </svg>
);
const cell = (v: string) => {
  if (v === "*") return <Star />;
  if (v === "p") return <Plug />;
  if (v === "b") return <Plug blue />;
  if (v.startsWith("CCTDI")) return <span><i className="text-[#2a7dc9] not-italic">CCTDI</i>, <i className="text-[#2a7dc9] not-italic">CCOFF</i></span>;
  if (v === "CCOFF") return <span className="text-[#2a7dc9]">{v}</span>;
  return v;
};
type RowsProps = { rows: string[][]; grid: string; active: number; focus: number; raised: number[] };
const Rows = ({ rows, grid, active, focus, raised }: RowsProps) => (
  <>
    {rows.map((r, i) => (
      <div key={i} className={grid + " h-[15.260px] text-[7.950px] text-[#333] " + (i === active ? "bg-[#b0e0e4]" : i % 2 ? "bg-[#f5f5f5]" : "bg-white")}>
        {r.map((v, j) => (
          <div key={j} className={"flex items-center overflow-hidden border-r pl-[6px] leading-none whitespace-nowrap " + (raised.includes(j) ? "pb-[0.500px] text-[7.750px] " : "pt-[1.500px] ") + (i === active && j === focus ? "border-y border-[#9aa]" : i === active ? "border-r-[#a3d6dc]" : "border-r-[#ebebeb]")}>
            {cell(v)}
          </div>
        ))}
      </div>
    ))}
  </>
);
const Heads = ({ names, grid }: { names: string[]; grid: string }) => (
  <div className={grid + " h-[15px] shrink-0 border-t border-b border-[#b5c3d0] bg-linear-to-b from-[#dbe9f7] to-[#b8d3ec] text-[7.700px] text-[#1d5068]"}>
    {names.map((n, i) => (
      <div key={i} className="flex items-center border-r border-[#a9bccd] pt-[1px] pl-[6px] leading-none whitespace-nowrap">{n}</div>
    ))}
  </div>
);
const Group = ({ label, plus, className }: { label?: string; plus?: boolean; className: string }) => (
  <div className={"flex items-center border-r border-[#b5bcc4] pt-[1px] pl-[6px] leading-none whitespace-nowrap " + className}>
    {label}
    {plus && <Plus />}
  </div>
);
const names1 = ["CC", "ALM", "RUN", "OEM", "Reefer ID", "Booking #", "Event", "Event Time (ETT)", "Fence Name", "City", "State", "Country", "Alarm", "Opr. Mode", "T Set (°F)", "T Sup. 1 (°F)", "T Rtn. 1"];
const raw1 = [
  "ORBU5603810|CAT139887|CC temp out of range...|09:15:07|OCTV1 DOCKS|Urb San Antonio|Puerto Rico|UNITED STATES|CCTDI, CCOFF|Cool|32|39|42.4",
  "COMU8427358|CAT251731|CC temp out of range...|09:10:08|-NA-|-NA-|-NA-|HONDURAS|CCTDI, CCOFF|Cool|0|20|21.7",
  "COMU8432884|CAT342817|Scheduled update|09:21:40|COMTX TERMINAL|-NA-|-NA-|HONDURAS|CCOFF|Cool|-10|-14.6|-8.9",
  "COMU8420749|-NA-|Scheduled update|09:20:50|-NA-|Kelayres|Pennsylvania|UNITED STATES|CCOFF|Cool|35|34.9|35",
  "ORBU5566336|CAT132433|Scheduled update|09:15:12|SLU7X TERMINAL|Jacksonville|Florida|UNITED STATES|CCOFF|Idle|65|64.9|64.5",
  "COMU8427893|CAT022340|Scheduled update|09:14:29|-NA-|-NA-|-NA-|DOMINICAN REPUB...|CCOFF|Idle|0|1.5|0.3",
  "ORBU5568473|CAT024581|Scheduled update|09:12:45|PORT RCU|-NA-|-NA-|TRINIDAD AND TOB...|CCOFF|Cool|32|31.9|34.1",
  "COMU8438049|CAT406493|Scheduled update|09:12:22|-NA-|Jacksonville|Florida|UNITED STATES|CCOFF|Cool|-10|-17.1|-11.8",
  "ORBU5561930|CAT200146|Scheduled update|09:09:24|EXPR TESMEX|San Juan|Puerto Rico|UNITED STATES|CCOFF|Cool|45|45|45.8",
  "ORBU5563300|CAT076299|Entering GeoFence|09:04:25|GTX - TRN|-NA-|-NA-|HONDURAS|CCOFF|Cool|36|36|37.2",
  "ORBU5561566|CAT313229|Scheduled update|09:01:15|-NA-|Jacksonville|Florida|-NA-|CCOFF|Idle|0|-5.1|-1.8",
];
const rows1 = raw1.map((s) => {
  const p = s.split("|");
  p[3] = "12/07/2018 " + p[3];
  return ["*", "", "p", "CAR", ...p];
});
const names2 = ["CC", "ALM", "RUN", "VSL", "TRIP", "OEM", "RFR ID", "Event", "Event Time (ETT)", "Fence Name", "Fence ID", "City", "State", "Country", "Zip", "RFR Data Time (ETT)", "Alarm", "Opr."];
const raw2 = [
  "p|CC temp out of range...|09:15:07|-NA-|-NA-|-NA-|-NA-|-NA-|CCTDI, CCOFF|",
  "p|Scheduled update|09:11:23|Urb San Antonio|Puerto Rico|UNITED STATES|00703|12/07/2018 09:11:23|CCOFF|Cool",
  "p|Scheduled update|08:11:02|Urb San Antonio|Puerto Rico|UNITED STATES|00703|12/07/2018 08:11:02|CCOFF|Cool",
  "p|CC Off Power Reset|07:45:04|-NA-|-NA-|-NA-|-NA-|-NA-|CCOFF|",
  "p|AC Power On|07:40:02|Urb San Antonio|Puerto Rico|UNITED STATES|00703|-NA-|CCOFF|",
  "b|CC Power Off|07:35:03|-NA-|-NA-|-NA-|-NA-|-NA-|CCOFF|",
];
const rows2 = raw2.map((s) => {
  const [run, ev, t, ...rest] = s.split("|");
  return ["*", "", run, "", "", "CAR", "ORBU5603810", ev, "12/07/2018 " + t, "-NA-", "-NA-", ...rest];
});

const Tools = () => (
  <div className="flex h-[16px] w-[78px] shrink-0 divide-x divide-[#e2e2e2] rounded-[2px] border border-[#dedede] bg-white text-[#ff7b00] shadow-[0_1px_1px_rgba(0,0,0,0.12)]">
    <span className="flex flex-1 items-center justify-center pr-[1px]"><FaSyncAlt className="size-[7px]" /></span>
    <span className="flex flex-1 items-center justify-center"><FaRegFileExcel className="size-[8.500px]" /></span>
    <span className="flex flex-1 items-center justify-center"><FaEnvelope className="size-[8.500px]" /></span>
  </div>
);
const VScroll = ({ thumb }: { thumb: string }) => (
  <div className="absolute inset-y-0 right-0 flex w-[10px] flex-col items-center bg-[#e9e9e9]">
    <svg className="h-[10px] w-[6px] shrink-0" viewBox="0 0 6 10"><path d="m1 6 2-2 2 2" fill="none" stroke="#888" strokeWidth=".8" /></svg>
    <div className={"w-full shrink-0 bg-[#b9b9b9] " + thumb} />
    <span className="flex-1" />
    <svg className="h-[10px] w-[6px] shrink-0" viewBox="0 0 6 10"><path d="m1 4 2 2 2-2" fill="none" stroke="#888" strokeWidth=".8" /></svg>
  </div>
);
const Pager = ({ d }: { d: string }) => (
  <span className="flex h-[14px] w-[15.500px] items-center justify-center border border-[#8fbfe8] bg-[#e3eff9]">
    <svg className="h-[6px] w-[8px]" viewBox="0 0 8 6"><path d={d} fill="#0e5a75" /></svg>
  </span>
);
const DateBox = ({ value, className }: { value: string; className: string }) => (
  <div className={"flex h-[21px] shrink-0 rounded-[2px] border border-[#d8d8d8] bg-white text-[7.200px] text-[#555] " + className}>
    <span className="flex flex-1 items-center pl-[7px]">{value}</span>
    <span className="flex w-[25px] items-center justify-center border-l border-[#d8d8d8] bg-[#eee]">
      <Calendar />
    </span>
  </div>
);

export default function App() {
  return (
    <div className="relative flex h-[815px] w-[1568px] overflow-hidden bg-white pt-[3px] pl-[3px] font-['Lato','Liberation_Sans',sans-serif]">
      <div className="flex h-[809px] w-[1553.500px] flex-col overflow-hidden border-b-[1.500px] border-l border-b-[#4b5468] border-l-[#23506a] bg-[#7dbcf6]">
        <Navbar />
        <div className="flex items-start gap-[6px] pt-[6px] pl-[5px]">
          <div className="flex w-[368px] shrink-0 flex-col">
            <SearchPanel />
            <Panel title="Micro Alarms Fleet Overview" className="mt-[4px] h-[182px]" resize>
              <Donut split={275} color="#2585cc" />
              <div className="mt-[24.500px] flex justify-between pr-[42px] pl-[45px] text-[6.700px] font-bold">
                <span className="text-[#f22]">HIGH:175</span>
                <span className="text-[#2585cc]">MEDIUM:54</span>
              </div>
            </Panel>
            <Panel title="Cargo Care Fleet Overview" className="mt-[6.500px] h-[182.500px]" resize>
              <Donut split={337.500} color="#f0b400" />
              <div className="mt-[24.500px] flex text-[6.700px] font-bold">
                <span className="w-[119px] pl-[47px] text-[#f22]">HIGH:88</span>
                <span className="w-[130px] pl-[47.500px] text-[#2585cc]">MEDIUM:0</span>
                <span className="pl-[47px] text-[#f0b400]">LOW:6</span>
              </div>
            </Panel>
            <Panel title="Total Reefers Fleet Overview" className="mt-[6px] h-[190px]">
              <Pie />
              <div className="mt-[14.500px] grid grid-cols-[170px_1fr] gap-y-[0.500px] pl-[21px] text-[8.200px] leading-[10px] font-bold text-[#333]">
                <Legend dot="bg-[#3fa638]" label="Assets Reporting, Powered On" />
                <Legend dot="bg-[#045a78]" label="Assets Reporting, Powered Off" />
                <Legend dot="bg-[#ff7b00]" label="" />
                <Legend dot="bg-[#636061]" label="" />
              </div>
            </Panel>
          </div>

          <div className="flex w-[1162px] shrink-0 flex-col">
            <Panel title="Total Reefers : 2314" className="h-[79px]" resize>
              <div className="flex gap-[23.500px] pt-[6.500px] pl-[9px]">
                <Card n="604" text="Assets Reporting, Powered On" bg="bg-[#3fa638]" fg="text-[#3fa638]" />
                <Card n="212" text="Assets Not Reporting, Last Powered On" bg="bg-[#ff7b00]" fg="text-[#ff7b22]" />
                <Card n="1002" text="Assets Reporting, Powered Off" bg="bg-[#045a78]" fg="text-[#045a78]" off />
                <Card n="469" text="Assets Not Reporting, Last Powered Off" bg="bg-[#636061]" fg="text-[#636061]" off />
              </div>
            </Panel>
            <Panel title="Reefer Map - Trace of CMCU 560381 0" className="mt-[4px] h-[259px]" expand>
              <div className="relative">
                <Imagery />
                <Popup />
              </div>
            </Panel>
            <Panel title="Reefer Grid" className="mt-[6px] h-[259.500px]" expand resize>
              <div className="flex h-[23px] shrink-0 items-start gap-[3px] bg-[#f5f7f9] pt-[3.500px] pl-[6px]">
                <Tools />
                <span className="flex h-[16px] w-[27px] items-center justify-center rounded-[2px] border border-[#ddd] bg-white shadow-[0_1px_1px_rgba(0,0,0,0.12)]">
                  <Tag />
                </span>
              </div>
              <div className={GRID1 + " h-[15.500px] shrink-0 border-t border-[#aaa] bg-linear-to-b from-white to-[#dfebf6] text-[7.600px] font-bold text-[#0f4c66]"}>
                <Group className="col-span-3" label="State indicators" plus />
                <Group className="col-span-2" label="Reefer identification" />
                <Group className="" label="Booking" plus />
                <Group className="col-span-6" label="Report date/time and location" plus />
                <Group className="col-span-5" label="Reefer status and sensor reporting" plus />
              </div>
              <Heads names={names1} grid={GRID1} />
              <div className="relative h-[160.500px] shrink-0 overflow-hidden">
                <Rows rows={rows1} grid={GRID1} active={0} focus={6} raised={[4, 8]} />
                <VScroll thumb="h-[59px]" />
              </div>
              <div className="flex h-[9px] shrink-0 items-center bg-[#e6e6e6]">
                <svg className="h-[8px] w-[10px]" viewBox="0 0 10 8"><path d="M6 2 4 4l2 2" fill="none" stroke="#888" strokeWidth=".8" /></svg>
                <div className="h-full w-[506px] bg-[#b9b9b9]" />
                <span className="flex-1" />
                <svg className="mr-[10px] h-[8px] w-[10px]" viewBox="0 0 10 8"><path d="m4 2 2 2-2 2" fill="none" stroke="#888" strokeWidth=".8" /></svg>
              </div>
              <div className="flex flex-1 items-center pt-[1px] pr-[14px] pl-[7.500px] text-[7.900px] text-[#333]">
                <span className="w-[114.500px] pb-[2.500px]">1 to 25 of 604</span>
                <span className="w-[38px] pb-[1.500px] whitespace-nowrap">Page Size:</span>
                <span className="mb-[1px] flex h-[12.500px] w-[28.500px] items-center justify-between border border-[#888] px-[2px] leading-none">
                  25 <Chevron />
                </span>
                <span className="flex-1" />
                <div className="flex items-center">
                  <Pager d="M0 0h1.500v2.500L4.500 0v2.500L7 0h1v6H7L4.500 3.500V6l-3-2.500V6H0Z" />
                  <span className="w-[7px]" />
                  <Pager d="M1.500 0H3.200v2.500L6.200 0v6L3.200 3.500V6H1.500Z" />
                  <span className="w-[53px] text-center whitespace-nowrap">Page 1 of 43</span>
                  <Pager d="M6.500 0H4.800v2.500L1.800 0v6L4.800 3.500V6H6.500Z" />
                  <span className="w-[7px]" />
                  <Pager d="M8 0H6.500v2.500L3.500 0v2.500L1 0H0v6h1l2.500-2.500V6l3-2.500V6H8Z" />
                </div>
              </div>
            </Panel>
            <Panel title={<>Reefer History Grid - Trace of <span className="-ml-[1.500px] text-[8.800px] font-medium">ORBU5603810</span></>} className="mt-[6px] h-[190px]" expand>
              <div className="flex h-[28px] shrink-0 items-start bg-[#f5f7f9] pt-[3px] pl-[6px] text-[7.800px] leading-[21px] text-[#444]">
                <Tools />
                <span className="w-[442px] pr-[10.500px] text-right">From:</span>
                <DateBox value="11/25/2018 12:00 AM" className="w-[243px]" />
                <span className="w-[58px] pr-[11px] text-right">To:</span>
                <DateBox value="12/07/2018 11:59 PM" className="w-[233.500px]" />
                <Btn label="Search" className="ml-[47px] w-[42px]" />
              </div>
              <div className={GRID2 + " h-[15.500px] shrink-0 border-t border-[#aaa] bg-linear-to-b from-white to-[#dfebf6] text-[7.550px] font-bold text-[#0f4c66]"}>
                <Group className="col-span-6" />
                <Group className="col-span-2" label="Latest Event" />
                <Group className="col-span-10" label="Last Reported Reefer and Device data" />
              </div>
              <Heads names={names2} grid={GRID2} />
              <div className="relative shrink-0 overflow-hidden">
                <Rows rows={rows2} grid={GRID2} active={1} focus={9} raised={[6]} />
                <VScroll thumb="h-[55px]" />
              </div>
            </Panel>
          </div>
        </div>
      </div>
      <div className="flex h-[808px] w-[8.500px] flex-col items-center bg-[#ebebeb]">
        <svg className="h-[10px] w-[8px] shrink-0" viewBox="0 0 8 10"><path d="m2 6 2-2 2 2" fill="none" stroke="#888" strokeWidth=".8" /></svg>
        <div className="h-[700px] w-full shrink-0 bg-[#b9b9b9]" />
        <span className="flex-1" />
        <svg className="h-[10px] w-[8px] shrink-0" viewBox="0 0 8 10"><path d="m2 4 2 2 2-2" fill="none" stroke="#888" strokeWidth=".8" /></svg>
      </div>
      <svg className="absolute top-[372px] left-[1520px] h-[44px] w-[30px]" viewBox="0 0 30 44">
        <path d="M6 4 25 21 6 40" fill="none" stroke="#c9d0d6" strokeWidth="5" opacity=".4" />
        <path d="M6 4 25 21 6 40" fill="none" stroke="#fff" strokeWidth="3.500" opacity=".7" />
      </svg>
    </div>
  );
}
